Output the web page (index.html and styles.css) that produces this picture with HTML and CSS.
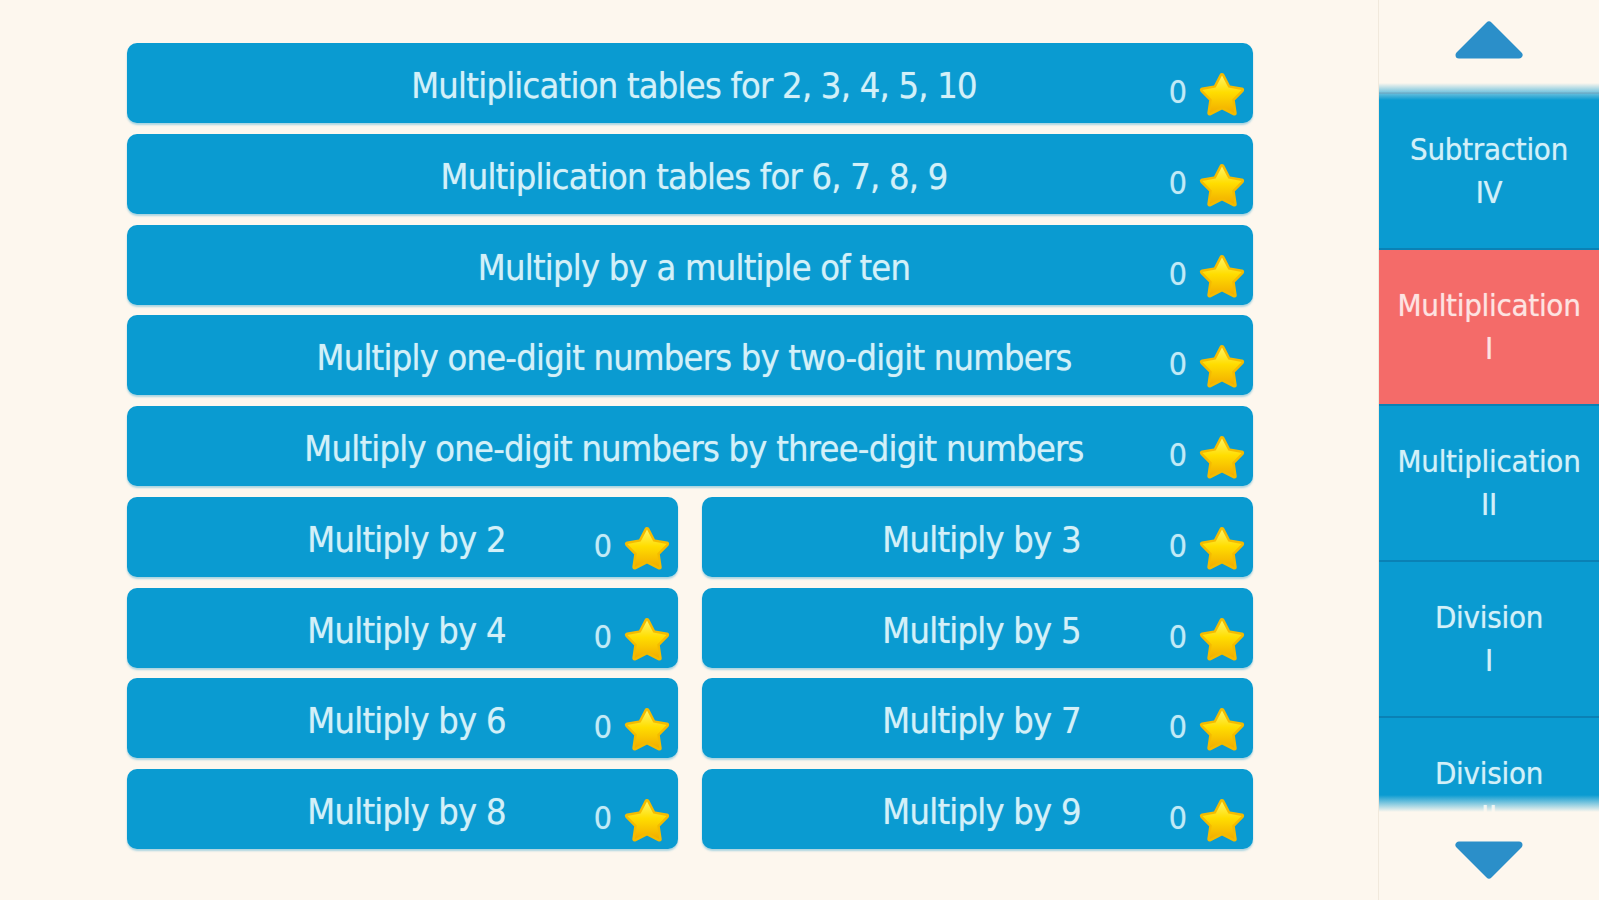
FILE: index.html
```html
<!DOCTYPE html>
<html lang="en">
<head>
<meta charset="utf-8">
<title>Multiplication</title>
<link rel="stylesheet" href="styles.css">
</head>
<body>
<svg class="defs" width="0" height="0" aria-hidden="true">
  <defs>
    <linearGradient id="starFill" x1="0" y1="0" x2="0" y2="1">
      <stop offset="0" stop-color="#fff564"/>
      <stop offset="0.45" stop-color="#ffdd00"/>
      <stop offset="1" stop-color="#f2ac00"/>
    </linearGradient>
    <symbol id="star" viewBox="0 0 48 46">
      <polygon points="24,4.5 30.3,16.6 43.6,18.9 34.2,28.6 36.2,42 24,35.8 11.8,42 13.8,28.6 4.4,18.9 17.7,16.6" fill="url(#starFill)" stroke="#f4bb00" stroke-width="5" stroke-linejoin="round"/>
      <polygon points="24,4.5 30.3,16.6 43.6,18.9 34.2,28.6 36.2,42 24,35.8 11.8,42 13.8,28.6 4.4,18.9 17.7,16.6" fill="url(#starFill)"/>
    </symbol>
  </defs>
</svg>
<div class="screen">
  <main class="main">
    <div class="grid">
      <div class="btn wide"><span class="label">Multiplication tables for 2, 3, 4, 5, 10</span><span class="score"><span class="num">0</span><svg class="star"><use href="#star"/></svg></span></div>
      <div class="btn wide"><span class="label">Multiplication tables for 6, 7, 8, 9</span><span class="score"><span class="num">0</span><svg class="star"><use href="#star"/></svg></span></div>
      <div class="btn wide"><span class="label">Multiply by a multiple of ten</span><span class="score"><span class="num">0</span><svg class="star"><use href="#star"/></svg></span></div>
      <div class="btn wide"><span class="label">Multiply one-digit numbers by two-digit numbers</span><span class="score"><span class="num">0</span><svg class="star"><use href="#star"/></svg></span></div>
      <div class="btn wide"><span class="label">Multiply one-digit numbers by three-digit numbers</span><span class="score"><span class="num">0</span><svg class="star"><use href="#star"/></svg></span></div>
      <div class="btn"><span class="label">Multiply by 2</span><span class="score"><span class="num">0</span><svg class="star"><use href="#star"/></svg></span></div>
      <div class="btn"><span class="label">Multiply by 3</span><span class="score"><span class="num">0</span><svg class="star"><use href="#star"/></svg></span></div>
      <div class="btn"><span class="label">Multiply by 4</span><span class="score"><span class="num">0</span><svg class="star"><use href="#star"/></svg></span></div>
      <div class="btn"><span class="label">Multiply by 5</span><span class="score"><span class="num">0</span><svg class="star"><use href="#star"/></svg></span></div>
      <div class="btn"><span class="label">Multiply by 6</span><span class="score"><span class="num">0</span><svg class="star"><use href="#star"/></svg></span></div>
      <div class="btn"><span class="label">Multiply by 7</span><span class="score"><span class="num">0</span><svg class="star"><use href="#star"/></svg></span></div>
      <div class="btn"><span class="label">Multiply by 8</span><span class="score"><span class="num">0</span><svg class="star"><use href="#star"/></svg></span></div>
      <div class="btn"><span class="label">Multiply by 9</span><span class="score"><span class="num">0</span><svg class="star"><use href="#star"/></svg></span></div>
    </div>
  </main>
  <aside class="side">
    <div class="arrow-wrap top">
      <svg class="arrow" viewBox="0 0 70 40"><polygon points="35,5 65,35 5,35" fill="#2b8fc9" stroke="#2b8fc9" stroke-width="7" stroke-linejoin="round"/></svg>
    </div>
    <div class="viewport">
      <ul class="cats">
        <li class="cat"></li>
        <li class="cat">Subtraction<br>IV</li>
        <li class="cat active">Multiplication<br>I</li>
        <li class="cat">Multiplication<br>II</li>
        <li class="cat">Division<br>I</li>
        <li class="cat">Division<br>II</li>
      </ul>
      <div class="fade fade-top"></div>
      <div class="fade fade-bottom"></div>
    </div>
    <div class="arrow-wrap bottom">
      <svg class="arrow" viewBox="0 0 70 40"><polygon points="5,5 65,5 35,35" fill="#2b8fc9" stroke="#2b8fc9" stroke-width="7" stroke-linejoin="round"/></svg>
    </div>
  </aside>
</div>
</body>
</html>
```
FILE: styles.css
```css
html, body {
  margin: 0;
  padding: 0;
  background: #fdf7ee;
}

body {
  font-family: "DejaVu Sans Condensed", "DejaVu Sans", sans-serif;
  font-stretch: semi-condensed;
  overflow: hidden;
}

.defs {
  position: absolute;
  width: 0;
  height: 0;
}

.screen {
  display: flex;
  width: 1599px;
  height: 900px;
}

.main {
  width: 1378px;
  padding: 43px 0 0 127px;
  box-sizing: border-box;
}

.grid {
  display: grid;
  grid-template-columns: 551px 551px;
  grid-auto-rows: 80px;
  column-gap: 24px;
  row-gap: 10.75px;
  width: 1126px;
}

.btn {
  display: grid;
  grid-template-columns: 1fr auto 1fr;
  background: #0a9bd1;
  border-radius: 10px;
  box-shadow: 0 2px 2px rgba(20, 150, 200, 0.35);
  color: #d3f0f8;
}

.btn.wide {
  grid-column: span 2;
}

.label {
  grid-column: 2;
  align-self: center;
  font-size: 36px;
  letter-spacing: -0.8px;
  white-space: nowrap;
  text-shadow: 0 0 1px rgba(220, 245, 255, 0.6);
  padding: 5px 0 0 8px;
}

.score {
  grid-column: 3;
  justify-self: end;
  align-self: end;
  display: flex;
  align-items: center;
  gap: 11px;
  margin: 0 7px 6px 0;
}

.num {
  font-size: 32px;
  line-height: 1;
  margin-top: -4px;
  color: #c2eaf6;
  text-shadow: 0 0 1px rgba(220, 245, 255, 0.5);
}

.star {
  width: 48px;
  height: 46px;
  display: block;
}

.side {
  width: 221px;
  height: 900px;
  border-left: 1px solid #f1e9dc;
  display: flex;
  flex-direction: column;
  box-sizing: border-box;
}

.arrow-wrap {
  display: flex;
  justify-content: center;
}

.arrow-wrap.top {
  height: 80px;
  padding-top: 20px;
  box-sizing: border-box;
}

.arrow-wrap.bottom {
  height: 85px;
  padding-top: 25px;
  box-sizing: border-box;
}

.arrow {
  width: 70px;
  height: 40px;
  display: block;
}

.viewport {
  position: relative;
  height: 735px;
  overflow: hidden;
}

.cats {
  list-style: none;
  margin: -142px 0 0 0;
  padding: 0;
}

.cat {
  height: 154px;
  border-bottom: 2px solid #0a81b5;
  background: #0a9bd1;
  color: #d3f0f8;
  font-size: 31px;
  letter-spacing: -0.3px;
  line-height: 43px;
  text-align: center;
  display: flex;
  align-items: center;
  justify-content: center;
  text-shadow: 0 0 1px rgba(220, 245, 255, 0.6);
}

.cat.active {
  background: #f46b69;
  color: #fde3e1;
  text-shadow: 0 0 1px rgba(255, 235, 235, 0.6);
}

.fade {
  position: absolute;
  left: 0;
  right: 0;
  height: 20px;
  pointer-events: none;
}

.fade-top {
  top: 0;
  background: linear-gradient(to bottom, #fdf7ee 0, #fdf7ee 3px, rgba(253, 247, 238, 0) 20px);
}

.fade-bottom {
  bottom: 0;
  background: linear-gradient(to top, #fdf7ee 0, #fdf7ee 3px, rgba(253, 247, 238, 0) 20px);
}
```
